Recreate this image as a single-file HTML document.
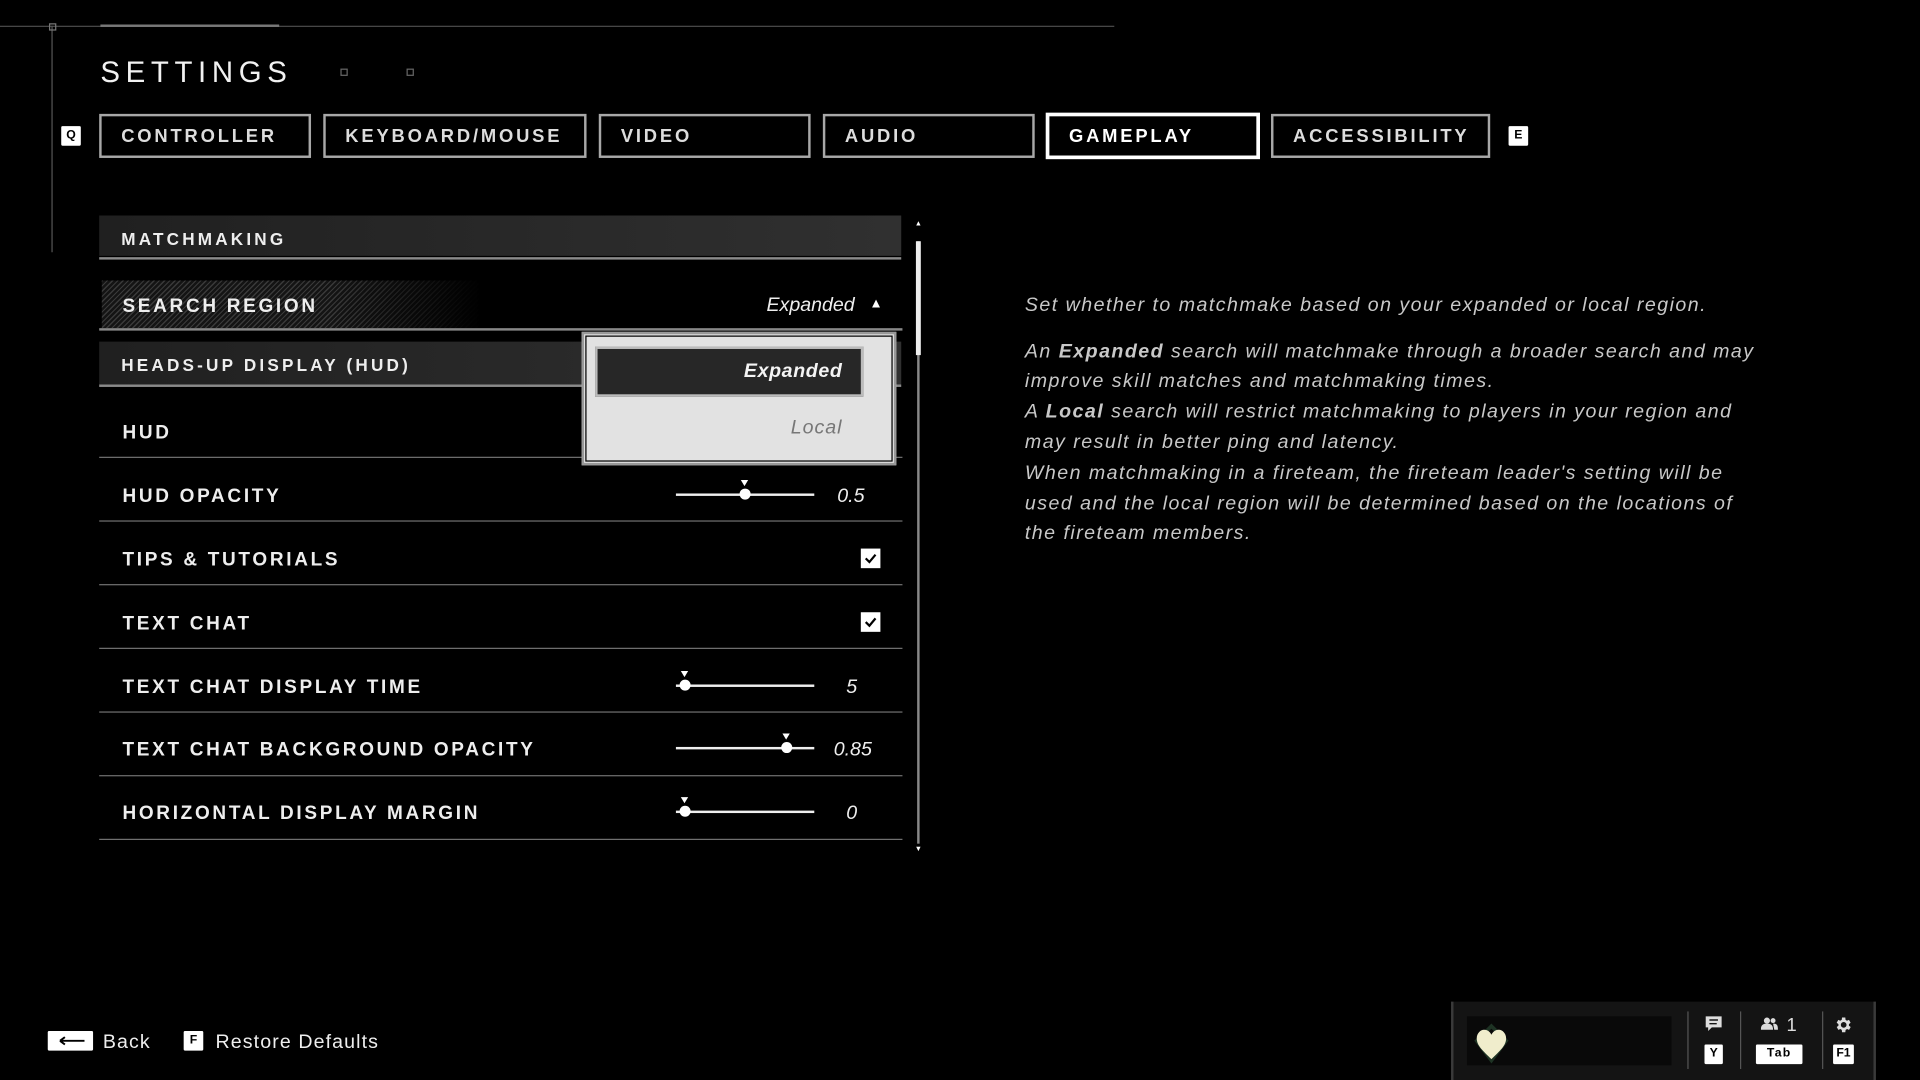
<!DOCTYPE html>
<html><head><meta charset="utf-8"><style>
html,body{margin:0;padding:0;background:#000;width:1920px;height:1080px;overflow:hidden}
#w{position:absolute;left:0;top:0;width:1568px;height:882px;transform:scale(1.22449);transform-origin:0 0;font-family:"Liberation Sans",sans-serif;color:#fff}
.a{position:absolute}
.t{position:absolute;white-space:nowrap}
.tab{position:absolute;top:93px;height:32px;border:2px solid #a8a8a8;box-sizing:content-box;font-size:15px;letter-spacing:2.3px;line-height:34px;color:#ddd;font-weight:bold}
.tab span{padding-left:16px}
.key{position:absolute;background:#fff;color:#000;font-size:10px;font-weight:bold;text-align:center;border-radius:1px}
.hdr{position:absolute;left:81px;width:655px;background:linear-gradient(90deg,#202020,#303030);border-bottom:2px solid #000;}
.hdrl{position:absolute;left:81px;width:655px;height:2px;background:#8a8a8a}
.lbl{position:absolute;left:100px;font-size:15.5px;letter-spacing:2.2px;color:#eee;font-weight:bold;white-space:nowrap;transform:translateY(-50%);margin-top:2px}
.line{position:absolute;left:81px;width:656px;height:1px;background:#707070}
.val{position:absolute;font-style:italic;font-size:16px;color:#eee;transform:translateY(-50%);text-align:right;width:60px;margin-top:2px}
.trk{position:absolute;left:552px;width:113px;height:2px;background:#eee}
.dot{position:absolute;width:9px;height:9px;border-radius:50%;background:#fff}
.tri{position:absolute;width:0;height:0;border-left:3px solid transparent;border-right:3px solid transparent;border-top:5px solid #fff}
.cb{position:absolute;left:703px;width:16px;height:16px;background:#fff}
.d{position:absolute;left:837px;font-size:16px;font-style:italic;color:#c8c8c8;letter-spacing:1.2px;white-space:nowrap;transform:translateY(-50%);margin-top:2px}
</style></head><body><div id="w">
<div class="a" style="left:0;top:21px;width:910px;height:1px;background:#4a4a4a"></div>
<div class="a" style="left:82px;top:20px;width:146px;height:2px;background:#777"></div>
<div class="a" style="left:42px;top:21px;width:1px;height:185px;background:#555"></div>
<div class="a" style="left:40px;top:19px;width:4px;height:4px;border:1px solid #777"></div>
<div class="t" style="left:82px;top:46px;font-size:24px;letter-spacing:4.6px;color:#f2f2f2">SETTINGS</div>
<div class="a" style="left:278px;top:56px;width:4px;height:4px;border:1px solid #666"></div>
<div class="a" style="left:332px;top:56px;width:4px;height:4px;border:1px solid #666"></div>

<div class="key" style="left:50px;top:103px;width:16px;height:16px;line-height:16px">Q</div>
<div class="tab" style="left:81px;width:169px"><span>CONTROLLER</span></div>
<div class="tab" style="left:264px;width:211px"><span>KEYBOARD/MOUSE</span></div>
<div class="tab" style="left:489px;width:169px"><span>VIDEO</span></div>
<div class="tab" style="left:672px;width:169px"><span>AUDIO</span></div>
<div class="tab" style="left:854px;width:169px;border:3px solid #fff;top:92px;color:#fff"><span>GAMEPLAY</span></div>
<div class="tab" style="left:1038px;width:175px"><span>ACCESSIBILITY</span></div>
<div class="key" style="left:1232px;top:103px;width:16px;height:16px;line-height:16px">E</div>

<div class="hdr" style="top:176px;height:33px"></div>
<div class="hdrl" style="top:210px"></div>
<div class="lbl" style="top:193px;left:99px;font-size:14px;letter-spacing:2.6px">MATCHMAKING</div>

<div class="a" style="left:83px;top:229px;width:310px;height:39px;background:repeating-linear-gradient(135deg,#3a3a3a 0 1px,#141414 1px 3px);-webkit-mask-image:linear-gradient(90deg,#000 60%,transparent);mask-image:linear-gradient(90deg,#000 60%,transparent)"></div>
<div class="lbl" style="top:249px">SEARCH REGION</div>
<div class="t" style="left:560px;width:138px;text-align:right;top:241px;font-size:16px;font-style:italic;color:#eee">Expanded</div>
<div class="t" style="left:710px;top:242px;font-size:11px">▲</div>
<div class="line" style="top:268px;background:#888;height:2px"></div>

<div class="hdr" style="top:279px;height:35px"></div>
<div class="hdrl" style="top:314px"></div>
<div class="lbl" style="top:296px;left:99px;font-size:14px;letter-spacing:2.6px">HEADS-UP DISPLAY (HUD)</div>

<div class="lbl" style="top:352px">HUD</div>
<div class="line" style="top:373px"></div>
<div class="lbl" style="top:404px">HUD OPACITY</div>
<div class="trk" style="top:403px"></div><div class="dot" style="left:604px;top:399px"></div><div class="tri" style="left:605px;top:392px"></div>
<div class="val" style="left:646px;top:404px">0.5</div>
<div class="line" style="top:425px"></div>
<div class="lbl" style="top:456px">TIPS &amp; TUTORIALS</div>
<div class="cb" style="top:448px"><svg width="16" height="16"><path d="M4 8l3 3 5-6" stroke="#000" stroke-width="1.8" fill="none"/></svg></div>
<div class="line" style="top:477px"></div>
<div class="lbl" style="top:508px">TEXT CHAT</div>
<div class="cb" style="top:500px"><svg width="16" height="16"><path d="M4 8l3 3 5-6" stroke="#000" stroke-width="1.8" fill="none"/></svg></div>
<div class="line" style="top:529px"></div>
<div class="lbl" style="top:560px">TEXT CHAT DISPLAY TIME</div>
<div class="trk" style="top:559px"></div><div class="dot" style="left:555px;top:555px"></div><div class="tri" style="left:556px;top:548px"></div>
<div class="val" style="left:640px;top:560px">5</div>
<div class="line" style="top:581px"></div>
<div class="lbl" style="top:611px">TEXT CHAT BACKGROUND OPACITY</div>
<div class="trk" style="top:610px"></div><div class="dot" style="left:638px;top:606px"></div><div class="tri" style="left:639px;top:599px"></div>
<div class="val" style="left:652px;top:611px">0.85</div>
<div class="line" style="top:633px"></div>
<div class="lbl" style="top:663px">HORIZONTAL DISPLAY MARGIN</div>
<div class="trk" style="top:662px"></div><div class="dot" style="left:555px;top:658px"></div><div class="tri" style="left:556px;top:651px"></div>
<div class="val" style="left:640px;top:663px">0</div>
<div class="line" style="top:685px"></div>

<div class="a" style="left:749px;top:197px;width:2px;height:492px;background:#888"></div>
<div class="a" style="left:748px;top:197px;width:4px;height:93px;background:#eee"></div>
<div class="t" style="left:747px;top:180px;font-size:6px">▲</div>
<div class="t" style="left:747px;top:691px;font-size:6px">▼</div>

<div class="a" style="left:475px;top:271px;width:253px;height:105px;background:#e2e2e2;border:2px solid #999;outline:1px solid #000;outline-offset:-4px"></div>
<div class="a" style="left:486px;top:283px;width:215px;height:37px;background:#272727;border:2px solid #bbb"></div>
<div class="t" style="left:560px;width:128px;text-align:right;top:295px;font-size:16px;font-style:italic;font-weight:bold;color:#f4f4f4;letter-spacing:0.5px">Expanded</div>
<div class="t" style="left:560px;width:128px;text-align:right;top:341px;font-size:16px;font-style:italic;color:#777;letter-spacing:0.8px">Local</div>

<div class="d" style="top:248px">Set whether to matchmake based on your expanded or local region.</div>
<div class="d" style="top:286px">An <b>Expanded</b> search will matchmake through a broader search and may</div>
<div class="d" style="top:310px">improve skill matches and matchmaking times.</div>
<div class="d" style="top:335px">A <b>Local</b> search will restrict matchmaking to players in your region and</div>
<div class="d" style="top:360px">may result in better ping and latency.</div>
<div class="d" style="top:385px">When matchmaking in a fireteam, the fireteam leader's setting will be</div>
<div class="d" style="top:410px">used and the local region will be determined based on the locations of</div>
<div class="d" style="top:434px">the fireteam members.</div>

<div class="key" style="left:39px;top:842px;width:37px;height:16px"><svg width="37" height="16"><path d="M10 8h20M10 8l4-3M10 8l4 3" stroke="#000" stroke-width="1.6" fill="none"/></svg></div>
<div class="t" style="left:84px;top:843px;font-size:16px;color:#eee;letter-spacing:0.9px">Back</div>
<div class="key" style="left:150px;top:842px;width:16px;height:16px;line-height:16px">F</div>
<div class="t" style="left:176px;top:843px;font-size:16px;color:#eee;letter-spacing:0.9px">Restore Defaults</div>

<div class="a" style="left:1185px;top:818px;width:343px;height:64px;background:#141414;border-left:2px solid #3a3a3a;border-right:2px solid #3a3a3a"></div>
<div class="a" style="left:1198px;top:830px;width:167px;height:40px;background:#090909"></div>
<svg class="a" style="left:1202px;top:834px" width="34" height="36"><path d="M16 4l12 12-12 16L4 16z" fill="none" stroke="#1e3324" stroke-width="3"/><path d="M16 31C9 24 4 20 4 14c0-4 3-7 6-7 3 0 5 2 6 4 1-2 3-4 6-4 3 0 6 3 6 7 0 6-5 10-12 17z" fill="#f0edcc"/></svg>
<div class="a" style="left:1378px;top:826px;width:1px;height:47px;background:#555"></div>
<div class="a" style="left:1421px;top:826px;width:1px;height:47px;background:#555"></div>
<div class="a" style="left:1488px;top:826px;width:1px;height:47px;background:#555"></div>
<svg class="a" style="left:1392px;top:829px" width="15" height="14"><path d="M1 1h13v9H6l-3 3v-3H1z" fill="#ddd"/><path d="M4 4h7M4 7h6" stroke="#141414" stroke-width="1.2"/></svg>
<div class="key" style="left:1392px;top:853px;width:15px;height:16px;line-height:16px">Y</div>
<svg class="a" style="left:1438px;top:830px" width="14" height="12"><circle cx="5" cy="3.5" r="2.5" fill="#ddd"/><path d="M0 11c0-4 2-5 5-5s5 1 5 5z" fill="#ddd"/><circle cx="10" cy="3.5" r="2" fill="#ddd"/><path d="M10 6c3 0 4 1 4 5h-3" fill="#ddd"/></svg>
<div class="t" style="left:1459px;top:829px;font-size:15px;color:#ddd">1</div>
<div class="key" style="left:1434px;top:853px;width:38px;height:16px;line-height:16px;letter-spacing:1px">Tab</div>
<svg class="a" style="left:1497px;top:829px" width="16" height="16" viewBox="0 0 24 24"><path fill="#ddd" d="M19.4 13a7.5 7.5 0 000-2l2.1-1.6-2-3.5-2.5 1a7.6 7.6 0 00-1.7-1L15 3h-4l-.4 2.9a7.6 7.6 0 00-1.7 1l-2.5-1-2 3.5L6.6 11a7.5 7.5 0 000 2l-2.1 1.6 2 3.5 2.5-1a7.6 7.6 0 001.7 1L11 21h4l.4-2.9a7.6 7.6 0 001.7-1l2.5 1 2-3.5zM13 15.5a3.5 3.5 0 110-7 3.5 3.5 0 010 7z"/></svg>
<div class="key" style="left:1497px;top:853px;width:17px;height:16px;line-height:16px">F1</div>
</div></body></html>
